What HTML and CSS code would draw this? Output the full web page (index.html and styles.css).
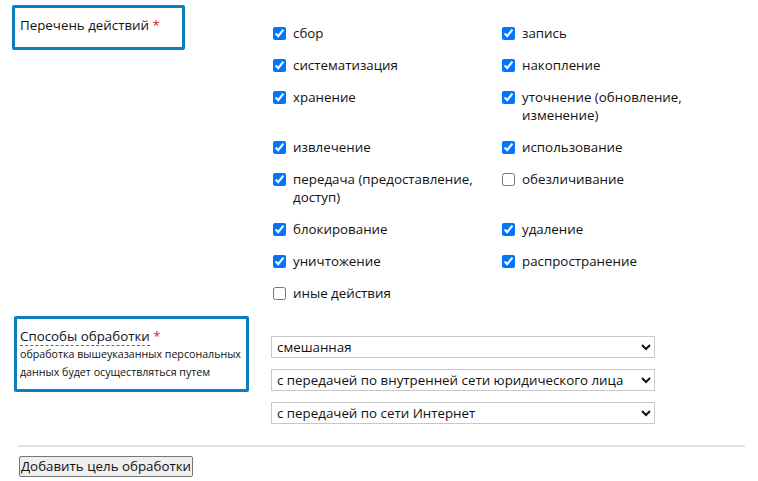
FILE: index.html
```html
<!DOCTYPE html>
<html lang="ru">
<head>
<meta charset="utf-8">
<title>Цель обработки</title>
<link rel="stylesheet" href="styles.css">
</head>
<body>
<form class="form">
  <div class="row row-actions">
    <div class="label-col">
      <div class="label-box box-actions">Перечень действий <span class="req">*</span></div>
    </div>
    <div class="checks">
      <label class="check"><input type="checkbox" checked><span>сбор</span></label>
      <label class="check"><input type="checkbox" checked><span>запись</span></label>
      <label class="check"><input type="checkbox" checked><span>систематизация</span></label>
      <label class="check"><input type="checkbox" checked><span>накопление</span></label>
      <label class="check"><input type="checkbox" checked><span>хранение</span></label>
      <label class="check"><input type="checkbox" checked><span>уточнение (обновление, изменение)</span></label>
      <label class="check"><input type="checkbox" checked><span>извлечение</span></label>
      <label class="check"><input type="checkbox" checked><span>использование</span></label>
      <label class="check"><input type="checkbox" checked><span>передача (предоставление, доступ)</span></label>
      <label class="check"><input type="checkbox"><span>обезличивание</span></label>
      <label class="check"><input type="checkbox" checked><span>блокирование</span></label>
      <label class="check"><input type="checkbox" checked><span>удаление</span></label>
      <label class="check"><input type="checkbox" checked><span>уничтожение</span></label>
      <label class="check"><input type="checkbox" checked><span>распространение</span></label>
      <label class="check"><input type="checkbox"><span>иные действия</span></label>
    </div>
  </div>
  <div class="row row-methods">
    <div class="label-col">
      <div class="label-box box-methods">
        <div class="title"><span class="dashed">Способы обработки</span> <span class="req">*</span></div>
        <div class="desc">обработка вышеуказанных персональных данных будет осуществляться путем</div>
      </div>
    </div>
    <div class="selects">
      <select class="sel"><option>смешанная</option></select>
      <select class="sel"><option>с передачей по внутренней сети юридического лица</option></select>
      <select class="sel"><option>с передачей по сети Интернет</option></select>
    </div>
  </div>
  <hr class="sep">
  <button type="button" class="add-btn">Добавить цель обработки</button>
</form>
</body>
</html>
```
FILE: styles.css
```css
html, body {
  margin: 0;
  padding: 0;
  background: #fff;
}
body {
  font-family: "Open Sans", "Liberation Sans", sans-serif;
  font-size: 13.33px;
  color: #111;
}
.form {
  padding: 5px 13px 0 12px;
}
.row {
  display: flex;
  align-items: flex-start;
}
.label-col {
  width: 259px;
  flex: none;
}
.label-box {
  border: 3px solid #0b7fc1;
  border-radius: 2px;
  line-height: 18px;
}
.box-actions {
  width: 157px;
  padding: 8px 5px 13px 5px;
}
.req {
  color: #e8141b;
}
.checks {
  margin-top: 19px;
  margin-left: 2px;
  display: grid;
  grid-template-columns: 229px 229px;
  row-gap: 14px;
}
.check {
  display: flex;
  align-items: flex-start;
  line-height: 18px;
}
.check input {
  margin: 3px 7px 0 0;
  width: 13px;
  height: 13px;
  flex: none;
}
.check span {
  width: 190px;
}
.row-methods {
  margin-top: 14px;
}
.box-methods {
  margin-left: 2px;
  width: 226px;
  padding: 8px 0 8px 3px;
}
.title {
  line-height: 18px;
}
.dashed {
  border-bottom: 1px dashed #666;
}
.desc {
  font-size: 10.67px;
  line-height: 18px;
  color: #111;
}
.selects {
  margin-top: 20px;
  display: flex;
  flex-direction: column;
  gap: 11px;
}
.sel {
  width: 384px;
  height: 22px;
  font-family: "Open Sans", "Liberation Sans", sans-serif;
  font-size: 13.33px;
  color: #111;
  border: 1px solid #c8c8c8;
  border-radius: 0;
  background: #fff;
  padding: 0 0 0 1px;
}
.sep {
  margin: 21px 0 0 6px;
  border: 0;
  height: 2px;
  background: #e2e2e2;
}
.add-btn {
  margin: 9px 0 0 7px;
  font-family: "Open Sans", "Liberation Sans", sans-serif;
  font-size: 13.33px;
  color: #111;
  padding: 0 1px;
  height: 21px;
  line-height: 17px;
  border: 1px solid #767676;
  border-radius: 2px;
  background: #efefef;
}
```
